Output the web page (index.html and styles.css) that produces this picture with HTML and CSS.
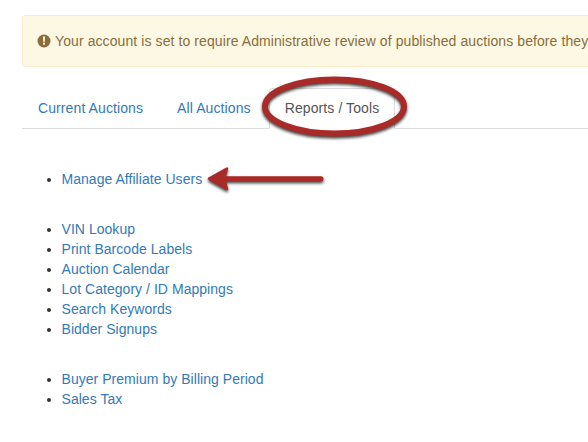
FILE: index.html
```html
<!DOCTYPE html>
<html lang="en">
<head>
<meta charset="utf-8">
<title>Reports / Tools</title>
<link rel="stylesheet" href="styles.css">
</head>
<body>
<main class="page">
  <div class="alert">
    <svg class="alert-icon" viewBox="0 0 14 14" aria-hidden="true"><circle cx="7" cy="7" r="6.5" fill="#8a6d3b"/><path d="M5.9 2.6h2.2l-.3 5.2H6.2z" fill="#fcf8e3"/><rect x="6" y="8.700" width="2" height="2" fill="#fcf8e3"/></svg>
    <span>Your account is set to require Administrative review of published auctions before they</span>
  </div>
  <nav class="tabs">
    <a class="tab" href="#">Current Auctions</a>
    <a class="tab" href="#">All Auctions</a>
    <a class="tab active" href="#">Reports / Tools</a>
  </nav>
  <ul class="links">
    <li><a href="#">Manage Affiliate Users</a></li>
  </ul>
  <ul class="links">
    <li><a href="#">VIN Lookup</a></li>
    <li><a href="#">Print Barcode Labels</a></li>
    <li><a href="#">Auction Calendar</a></li>
    <li><a href="#">Lot Category / ID Mappings</a></li>
    <li><a href="#">Search Keywords</a></li>
    <li><a href="#">Bidder Signups</a></li>
  </ul>
  <ul class="links">
    <li><a href="#">Buyer Premium by Billing Period</a></li>
    <li><a href="#">Sales Tax</a></li>
  </ul>
</main>
<svg class="annotation" width="588" height="442" viewBox="0 0 588 442" aria-hidden="true">
  <g class="mark">
    <ellipse cx="334.500" cy="106.500" rx="69.500" ry="27" fill="none" stroke="#a92a27" stroke-width="6"/>
    <path d="M321 178.700H222" fill="none" stroke="#a92a27" stroke-width="5" stroke-linecap="round"/>
    <path d="M209 178.700L227 168.500L224 178.700L227 189Z" fill="#a92a27" stroke="#a92a27" stroke-width="2.500" stroke-linejoin="round"/>
  </g>
</svg>
</body>
</html>
```
FILE: styles.css
```css
html, body {
  margin: 0;
  padding: 0;
  background: #fff;
  overflow: hidden;
  height: 100%;
}
body {
  font-family: "Liberation Sans", Arial, sans-serif;
  font-size: 14px;
  line-height: 20px;
  color: #333;
}
.page {
  box-sizing: border-box;
  width: 100%;
  padding: 15px 0 0 22px;
}
.alert {
  display: flex;
  align-items: center;
  gap: 4px;
  box-sizing: border-box;
  height: 52px;
  padding: 0 0 0 15px;
  margin-bottom: 21px;
  background: #fcf8e3;
  border: 1px solid #faebcc;
  border-right: 0;
  border-radius: 4px 0 0 4px;
  color: #8a6d3b;
  letter-spacing: 0.09px;
  white-space: nowrap;
}
.alert-icon {
  width: 14px;
  height: 14px;
  flex: none;
  margin-left: -1px;
}
.tabs {
  display: flex;
  gap: 2px;
  height: 40px;
  border-bottom: 1px solid #ddd;
  margin-bottom: 40px;
}
.tab {
  box-sizing: border-box;
  height: 41px;
  padding: 9px 15px 11px;
  border: 1px solid transparent;
  border-radius: 4px 4px 0 0;
  color: #337ab7;
  letter-spacing: 0.1px;
  text-decoration: none;
}
.tab.active {
  color: #555;
  background: #fff;
  border-color: #ddd #ddd #fff;
}
.links {
  margin: 0 0 30px;
  padding: 0 0 0 39.5px;
  list-style: disc;
}
.links a {
  color: #337ab7;
  letter-spacing: 0.04px;
  text-decoration: none;
}
.annotation {
  position: absolute;
  top: 0;
  left: 0;
  pointer-events: none;
}
.mark {
  filter: drop-shadow(0 2px 1.5px rgba(0, 0, 0, 0.75));
}
```
